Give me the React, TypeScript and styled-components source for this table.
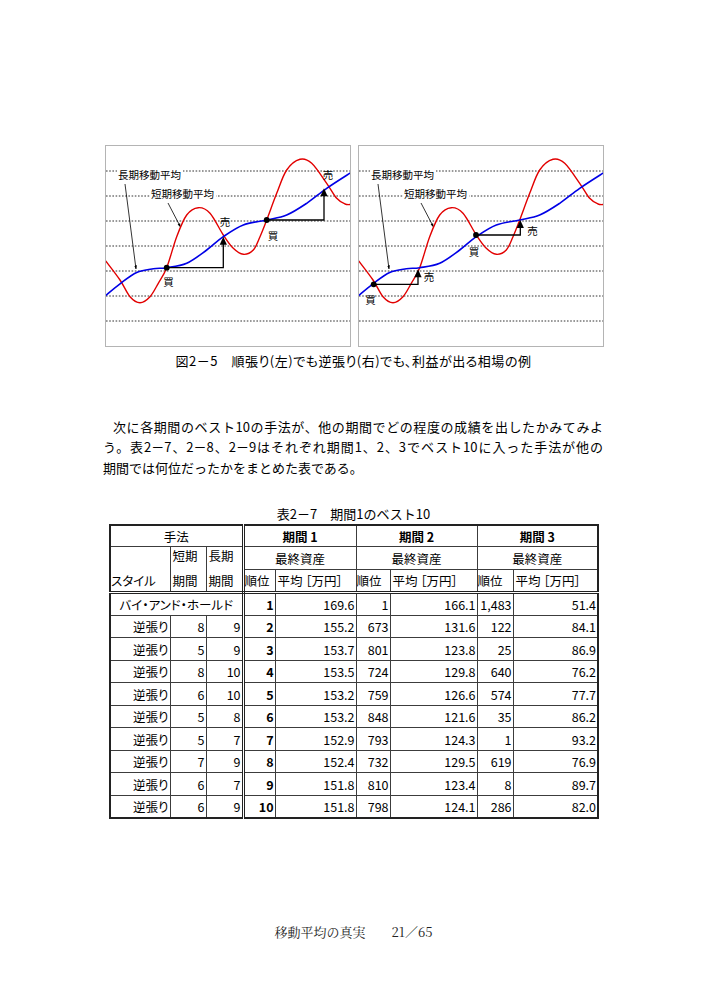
import React from 'react';
import styled, { createGlobalStyle } from 'styled-components';

const Global = createGlobalStyle`
  html, body { margin: 0; padding: 0; background: #fff; }
  body {
    font-family: "Noto Sans CJK JP", "Noto Sans", sans-serif;
    color: #000;
  }
`;

const Page = styled.div`
  width: 707px;
  height: 1000px;
  box-sizing: border-box;
  padding-top: 145px;
  display: flex;
  flex-direction: column;
`;

const ChartRow = styled.div`
  display: flex;
  gap: 7px;
  padding-left: 105px;
`;

const ChartBox = styled.div`
  width: 246px;
  height: 202px;
  box-sizing: border-box;
  border: 1px solid #b4b4b4;
  background: #fff;
`;

const ChartSvg = styled.svg`
  display: block;
  font-family: "Noto Sans CJK JP", sans-serif;
  font-size: 10.5px;
`;

const Caption = styled.div`
  margin-top: 6px;
  text-align: center;
  font-size: 13px;
  line-height: 16px;
  font-feature-settings: "palt";
  letter-spacing: 0.5px;
`;

const Paragraph = styled.div`
  margin-top: 48px;
  margin-left: 103px;
  width: 500px;
  font-size: 13px;
  line-height: 20.3px;
`;

const Line = styled.span<{ $justify?: boolean; $indent?: boolean }>`
  display: block;
  text-align: ${(p) => (p.$justify ? 'justify' : 'left')};
  text-align-last: ${(p) => (p.$justify ? 'justify' : 'left')};
  padding-left: ${(p) => (p.$indent ? '10px' : '0')};
`;

const TableTitle = styled.div`
  margin-top: 28px;
  text-align: center;
  font-size: 13px;
  line-height: 16px;
`;

const TableWrap = styled.div`
  margin-top: 2px;
  margin-left: 109px;
`;

const Table = styled.table`
  border-collapse: collapse;
  table-layout: fixed;
  width: 489px;
  border: 2px solid #222;
  font-size: 12.5px;
  line-height: 15px;
  font-feature-settings: "palt";
`;

const Row = styled.tr<{ $h: number }>`
  height: ${(p) => p.$h}px;
`;

type Align = 'left' | 'right' | 'center';

const Cell = styled.td<{
  $align?: Align;
  $bold?: boolean;
  $dblRight?: boolean;
  $dblBottom?: boolean;
  $valign?: 'top' | 'bottom' | 'middle';
  $pad?: number;
}>`
  border: 1px solid #3c3c3c;
  padding: 0 ${(p) => (p.$pad ?? 2)}px;
  text-align: ${(p) => p.$align ?? 'left'};
  vertical-align: ${(p) => p.$valign ?? 'middle'};
  font-weight: ${(p) => (p.$bold ? 700 : 400)};
  white-space: nowrap;
  overflow: hidden;
  ${(p) => (p.$dblRight ? 'border-right: 3px double #222;' : '')}
  ${(p) => (p.$dblBottom ? 'border-bottom: 3px double #222;' : '')}
`;

const TwoLine = styled.div`
  display: flex;
  flex-direction: column;
  justify-content: space-between;
  height: 40px;
  padding-top: 1px;
`;

const StyleLabel = styled.div`
  padding-bottom: 3px;
`;

const Footer = styled.div`
  margin-top: auto;
  padding-bottom: 60px;
  text-align: center;
  font-family: "Noto Serif CJK JP", "Liberation Serif", serif;
  font-size: 13px;
  line-height: 16px;
  color: #222;
`;

type Pt = [number, number];

function smooth(pts: Pt[]): string {
  let d = `M${pts[0][0]},${pts[0][1]}`;
  for (let i = 0; i < pts.length - 1; i++) {
    const p0 = pts[i - 1] || pts[i];
    const p1 = pts[i];
    const p2 = pts[i + 1];
    const p3 = pts[i + 2] || p2;
    const c1x = p1[0] + (p2[0] - p0[0]) / 6;
    const c1y = p1[1] + (p2[1] - p0[1]) / 6;
    const c2x = p2[0] - (p3[0] - p1[0]) / 6;
    const c2y = p2[1] - (p3[1] - p1[1]) / 6;
    d += ` C${c1x.toFixed(2)},${c1y.toFixed(2)} ${c2x.toFixed(2)},${c2y.toFixed(2)} ${p2[0]},${p2[1]}`;
  }
  return d;
}

const RED: Pt[] = [
  [0, 115], [15, 135], [25, 151.7], [35, 157.7], [45, 151.7], [53.3, 138.3], [61.7, 122.7],
  [71.7, 91.7], [81.7, 70], [93.3, 62.7], [105, 68.3], [118.3, 90], [128.3, 103.3],
  [138.3, 109.3], [148.3, 105], [155, 91.7], [161.7, 75], [171.7, 48.3], [181.7, 25],
  [195, 14.3], [206.7, 18.3], [221.7, 38.3], [231.7, 53.3], [240, 59], [246, 59.5],
];

const BLUE: Pt[] = [
  [0, 151], [15, 138.8], [31.7, 127.5], [48.3, 123.8], [61.7, 122.7], [81.7, 118.3],
  [101.7, 105], [118.3, 91.7], [138.3, 80], [161.7, 75], [181.7, 70], [201.7, 58.3],
  [221.7, 43.3], [246, 27.5],
];

const DOTTED_Y = [26, 51, 76, 101, 126, 151, 176];

type Trade = { x1: number; y1: number; x2: number; y2: number; buy: Pt; sell: Pt };

const Arrowhead: React.FC<{ x: number; y: number }> = ({ x, y }) => (
  <polygon points={`${x - 3.6},${y + 8} ${x + 3.6},${y + 8} ${x},${y}`} fill="#000" />
);

const Chart: React.FC<{ trades: Trade[] }> = ({ trades }) => {
  const red = smooth(RED);
  const blue = smooth(BLUE);
  return (
    <ChartBox>
      <ChartSvg width={244} height={200} viewBox="1 1 244 200">
        <defs>
          <marker id="thinArrow" viewBox="0 0 10 10" refX="9" refY="5" markerWidth="5" markerHeight="7" orient="auto">
            <path d="M0,1.5 L10,5 L0,8.5 Z" fill="#000" />
          </marker>
        </defs>
        {DOTTED_Y.map((y) => (
          <line key={y} x1={1} x2={245} y1={y} y2={y} stroke="#333" strokeWidth={1} strokeDasharray="1.6 1.6" />
        ))}
        <rect x={12} y={23} width={66} height={13} fill="#fff" />
        <text x={13} y={33.5}>長期移動平均</text>
        <rect x={45} y={42} width={66} height={13} fill="#fff" />
        <text x={46} y={52.5}>短期移動平均</text>
        <line x1={20} y1={39} x2={31} y2={124} stroke="#000" strokeWidth={0.8} markerEnd="url(#thinArrow)" />
        <line x1={63} y1={58} x2={75.5} y2={82} stroke="#000" strokeWidth={0.8} markerEnd="url(#thinArrow)" />
        <path d={red} fill="none" stroke="#e20000" strokeWidth={1.4} />
        <path d={blue} fill="none" stroke="#0000e6" strokeWidth={1.6} />
        {trades.map((t, i) => (
          <g key={i}>
            <polyline
              points={`${t.x1},${t.y1} ${t.x2},${t.y1} ${t.x2},${t.y2 + 6}`}
              fill="none"
              stroke="#000"
              strokeWidth={1.3}
            />
            <Arrowhead x={t.x2} y={t.y2} />
            <circle cx={t.x1} cy={t.y1} r={2.9} fill="#000" />
            <text x={t.buy[0]} y={t.buy[1]} textAnchor="middle">買</text>
            <text x={t.sell[0]} y={t.sell[1]} textAnchor="middle">売</text>
          </g>
        ))}
      </ChartSvg>
    </ChartBox>
  );
};

const LEFT_TRADES: Trade[] = [
  { x1: 61.7, y1: 122.7, x2: 118.3, y2: 91.7, buy: [63.5, 140.5], sell: [120, 80.5] },
  { x1: 161.7, y1: 75, x2: 219, y2: 43.3, buy: [168, 94.5], sell: [223, 33.5] },
];

const RIGHT_TRADES: Trade[] = [
  { x1: 15.7, y1: 139.3, x2: 60, y2: 124.3, buy: [12.5, 158.5], sell: [71, 136] },
  { x1: 118, y1: 90, x2: 162.3, y2: 75, buy: [116, 111], sell: [174.5, 89.5] },
];

type BodyRow = [string, number, number, number, string, string, string, string, string];

const ROWS: BodyRow[] = [
  ['逆張り', 8, 9, 2, '155.2', '673', '131.6', '122', '84.1'],
  ['逆張り', 5, 9, 3, '153.7', '801', '123.8', '25', '86.9'],
  ['逆張り', 8, 10, 4, '153.5', '724', '129.8', '640', '76.2'],
  ['逆張り', 6, 10, 5, '153.2', '759', '126.6', '574', '77.7'],
  ['逆張り', 5, 8, 6, '153.2', '848', '121.6', '35', '86.2'],
  ['逆張り', 5, 7, 7, '152.9', '793', '124.3', '1', '93.2'],
  ['逆張り', 7, 9, 8, '152.4', '732', '129.5', '619', '76.9'],
  ['逆張り', 6, 7, 9, '151.8', '810', '123.4', '8', '89.7'],
  ['逆張り', 6, 9, 10, '151.8', '798', '124.1', '286', '82.0'],
];

const COLS = [60, 36, 37, 32, 81, 34, 87, 36, 85];
const PERIODS = ['期間 1', '期間 2', '期間 3'];

const ResultTable: React.FC = () => (
  <Table>
    <colgroup>
      {COLS.map((w, i) => (
        <col key={i} style={{ width: w }} />
      ))}
    </colgroup>
    <tbody>
      <Row $h={22}>
        <Cell colSpan={3} $align="center" $dblRight>手法</Cell>
        {PERIODS.map((p) => (
          <Cell key={p} colSpan={2} $align="center" $bold>{p}</Cell>
        ))}
      </Row>
      <Row $h={23}>
        <Cell rowSpan={2} $valign="bottom" $pad={0} $dblBottom>
          <StyleLabel>スタイル</StyleLabel>
        </Cell>
        <Cell rowSpan={2} $dblBottom $valign="top">
          <TwoLine><span>短期</span><span>期間</span></TwoLine>
        </Cell>
        <Cell rowSpan={2} $dblBottom $dblRight $valign="top">
          <TwoLine><span>長期</span><span>期間</span></TwoLine>
        </Cell>
        {PERIODS.map((p) => (
          <Cell key={p} colSpan={2} $align="center">最終資産</Cell>
        ))}
      </Row>
      <Row $h={23}>
        {PERIODS.map((p) => (
          <React.Fragment key={p}>
            <Cell $dblBottom $pad={0}>順位</Cell>
            <Cell $dblBottom>平均 ［万円］</Cell>
          </React.Fragment>
        ))}
      </Row>
      <Row $h={22.5}>
        <Cell colSpan={3} $align="center" $dblRight>バイ・アンド・ホールド</Cell>
        <Cell $align="right" $bold $pad={1}>1</Cell>
        <Cell $align="right" $pad={1}>169.6</Cell>
        <Cell $align="right" $pad={1}>1</Cell>
        <Cell $align="right" $pad={1}>166.1</Cell>
        <Cell $align="right" $pad={1}>1,483</Cell>
        <Cell $align="right" $pad={1}>51.4</Cell>
      </Row>
      {ROWS.map((r, i) => (
        <Row $h={22.5} key={i}>
          <Cell $align="right" $pad={1}>{r[0]}</Cell>
          <Cell $align="right" $pad={1}>{r[1]}</Cell>
          <Cell $align="right" $pad={1} $dblRight>{r[2]}</Cell>
          <Cell $align="right" $pad={1} $bold>{r[3]}</Cell>
          <Cell $align="right" $pad={1}>{r[4]}</Cell>
          <Cell $align="right" $pad={1}>{r[5]}</Cell>
          <Cell $align="right" $pad={1}>{r[6]}</Cell>
          <Cell $align="right" $pad={1}>{r[7]}</Cell>
          <Cell $align="right" $pad={1}>{r[8]}</Cell>
        </Row>
      ))}
    </tbody>
  </Table>
);

export default function App() {
  return (
    <Page>
      <Global />
      <ChartRow>
        <Chart trades={LEFT_TRADES} />
        <Chart trades={RIGHT_TRADES} />
      </ChartRow>
      <Caption>図2－5　順張り(左)でも逆張り(右)でも、利益が出る相場の例</Caption>
      <Paragraph>
        <Line $justify $indent>次に各期間のベスト10の手法が、他の期間でどの程度の成績を出したかみてみよ</Line>
        <Line $justify>う。表2－7、2－8、2－9はそれぞれ期間1、2、3でベスト10に入った手法が他の</Line>
        <Line>期間では何位だったかをまとめた表である。</Line>
      </Paragraph>
      <TableTitle>表2－7　期間1のベスト10</TableTitle>
      <TableWrap>
        <ResultTable />
      </TableWrap>
      <Footer>移動平均の真実　　21／65</Footer>
    </Page>
  );
}
